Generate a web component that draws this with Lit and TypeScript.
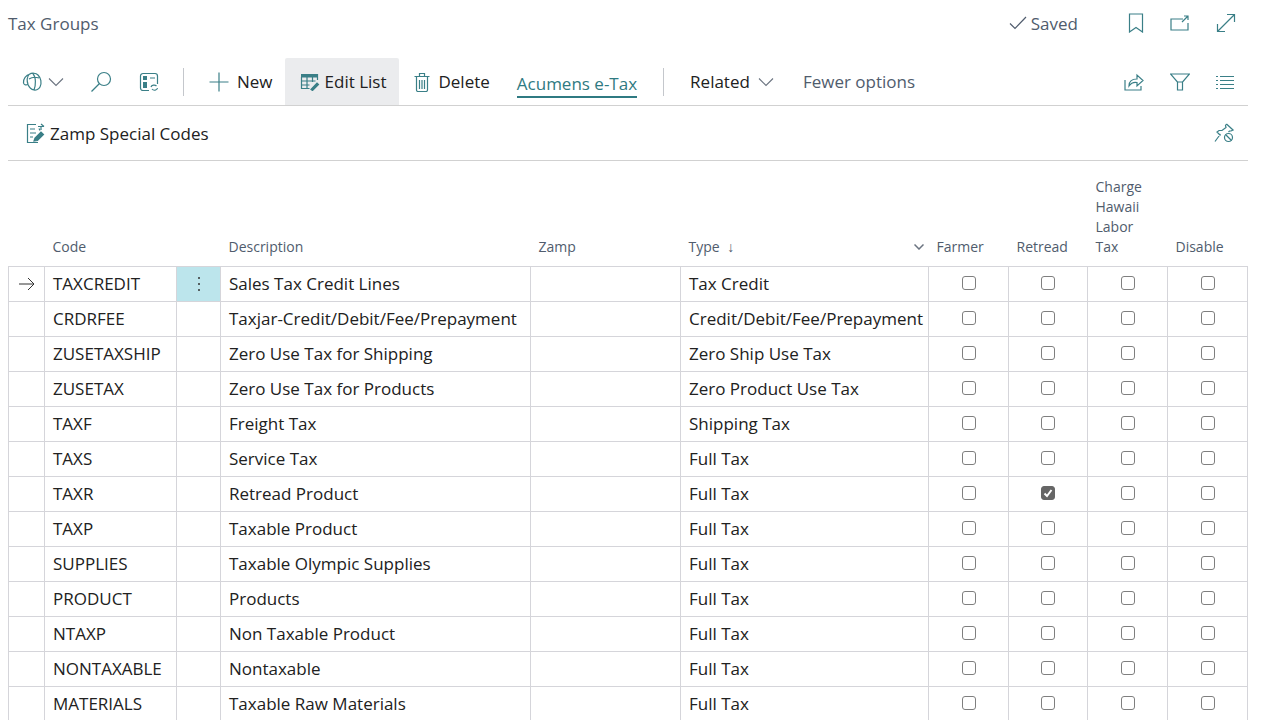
import { html, css, LitElement, svg } from 'lit';
import { customElement } from 'lit/decorators.js';

interface Row {
  code: string;
  description: string;
  type: string;
  retread?: boolean;
}

const rows: Row[] = [
  { code: 'TAXCREDIT', description: 'Sales Tax Credit Lines', type: 'Tax Credit' },
  { code: 'CRDRFEE', description: 'Taxjar-Credit/Debit/Fee/Prepayment', type: 'Credit/Debit/Fee/Prepayment' },
  { code: 'ZUSETAXSHIP', description: 'Zero Use Tax for Shipping', type: 'Zero Ship Use Tax' },
  { code: 'ZUSETAX', description: 'Zero Use Tax for Products', type: 'Zero Product Use Tax' },
  { code: 'TAXF', description: 'Freight Tax', type: 'Shipping Tax' },
  { code: 'TAXS', description: 'Service Tax', type: 'Full Tax' },
  { code: 'TAXR', description: 'Retread Product', type: 'Full Tax', retread: true },
  { code: 'TAXP', description: 'Taxable Product', type: 'Full Tax' },
  { code: 'SUPPLIES', description: 'Taxable Olympic Supplies', type: 'Full Tax' },
  { code: 'PRODUCT', description: 'Products', type: 'Full Tax' },
  { code: 'NTAXP', description: 'Non Taxable Product', type: 'Full Tax' },
  { code: 'NONTAXABLE', description: 'Nontaxable', type: 'Full Tax' },
  { code: 'MATERIALS', description: 'Taxable Raw Materials', type: 'Full Tax' },
];

const icon = (w: number, h: number, body: unknown) => html`
  <svg class="icon" width=${w} height=${h} viewBox="0 0 ${w} ${h}">${body}</svg>
`;

const chevron = html`
  <svg class="chev" width="16" height="10" viewBox="0 0 16 10"><path d="M1 1.5 8 8.5 15 1.5" /></svg>
`;

const icons = {
  bookmark: icon(16, 20, svg`<path d="M1.5 1h13v18l-6.5-4.5L1.5 19z" />`),
  share: icon(20, 16, svg`<path d="M13 4H1v11h17V8M12 7l6-6M14 1h4v4" />`),
  expand: icon(20, 20, svg`<path d="M1.5 18.5 18.5 1.5M11 1.500h7.500V9M1.500 11v7.500H9" />`),
  copilot: icon(22, 20, svg`<path d="M7 2.500C10 .5 14 1 16 3c3 3 4 8 2 12-1 2-4 3.500-6 3-3-.5-5-3-6-5.500C5 9.500 5 5 7 2.500zM8 2C4 3 1 7 1.500 11c.3 1.500 2 2.500 4.500 1.500M11 2c3 3 3 11 1 16M7 7c3-2 7-2 10-1" />`),
  search: icon(22, 22, svg`<circle cx="14" cy="8" r="6.500" /><path d="M9.500 12.500 1.500 20.500" />`),
  layout: icon(20, 20, svg`<path d="M10 18.500H4A2.500 2.500 0 0 1 1.500 16V4A2.500 2.500 0 0 1 4 1.500h12A2.500 2.500 0 0 1 18.500 4v8M11 6h5" /><rect class="solid" x="4" y="4" width="4" height="4" /><rect class="solid" x="4" y="10" width="4" height="6" /><path d="M12 15c.5-2 4-2.500 5.500-1M18.500 16c-.5 2.500-4 3-5.500 1" />`),
  plus: icon(20, 20, svg`<path d="M10 .5v19M.5 10h19" />`),
  editList: icon(20, 18, svg`<rect class="solid" x="1" y="1" width="17" height="3.500" /><path d="M1.500 4v11.500h8M7 4v11M12.500 4v5M1.500 8h14M1.500 12h8M17.500 1v6" /><path class="thick" d="M11 16.500l6-6.500 1.500 1.500-6 6z" />`),
  trash: icon(16, 20, svg`<path d="M2.500 5v13a1.500 1.500 0 0 0 1.500 1.500h8a1.500 1.500 0 0 0 1.500-1.500V5M.5 4.500h15M5.500 4V1.500h5V4M5.500 8v9M8 8v9M10.500 8v9" />`),
  shareOut: icon(20, 18, svg`<path d="M1 7v10h16v-4M5 13c0-5 3-7 8-7V2l6 5.500-6 5.500V9.500c-3-.5-6 .5-8 3.500z" />`),
  filter: icon(20, 18, svg`<path d="M.5 1h19l-7 8v8h-5V9zM7.500 9h5" />`),
  list: icon(18, 14, svg`<path d="M0 1.500h2M4 1.500h14M0 5.500h2M4 5.500h14M0 9.500h2M4 9.500h14M0 13.500h2M4 13.500h14" />`),
  specialCodes: icon(20, 20, svg`<path d="M10 1.500H1.500v18H12M15 4v3M4 6h5M4 10h6M4 14h3" /><path class="thick" d="M8 18l1-3 6-6 2.500 2.500-6 6z" /><path d="M12 3.500h6M15 1l3 2.500M13 5.500l1 2" />`),
  pin: icon(20, 20, svg`<path d="M12.500 1 19 7l-2 1-1.500 0-1 1M12.500 1l-1 1.500.5 2L8 7.500 5 7.500 3 9l3.500 3.500M6.500 11 1 18.500" /><circle cx="14.500" cy="14.500" r="4" /><path d="M11.500 11.500l6 6" />`),
  saved: icon(18, 14, svg`<path class="gray" d="M1 7.500 6 12.500 17 1" />`),
};

@customElement('app-root')
export class AppRoot extends LitElement {
  static styles = css`
    :host {
      display: block;
      width: 1280px;
      height: 720px;
      overflow: hidden;
      box-sizing: border-box;
      padding-left: 8px;
      background: #fff;
      color: #212121;
      font-family: 'Open Sans', 'Noto Sans', sans-serif;
      font-size: 17px;
    }

    svg.icon {
      display: block;
      flex: none;
      fill: none;
      stroke: #3a7f87;
      stroke-width: 1.2;
    }

    svg.icon .solid {
      fill: #3a7f87;
      stroke: none;
    }

    svg.icon .thick {
      fill: #3a7f87;
    }

    svg.icon .gray {
      stroke: #505c6d;
    }

    svg.chev {
      display: block;
      fill: none;
      stroke: #6b7480;
      stroke-width: 1.1;
    }

    .titlebar {
      width: 1240px;
      height: 46px;
      display: flex;
      align-items: center;
      color: #505c6d;
    }

    .title {
      flex: 1;
    }

    .saved {
      display: flex;
      align-items: center;
      gap: 4px;
      margin-right: 50px;
    }

    .title-icons {
      display: flex;
      align-items: center;
      gap: 26px;
      margin-right: 12px;
    }

    .toolbar {
      width: 1240px;
      height: 47px;
      margin-top: 12px;
      display: flex;
      align-items: center;
      border-bottom: 1px solid #d1d1d1;
      box-sizing: content-box;
    }

    .quick {
      display: flex;
      align-items: center;
      padding-left: 14px;
    }

    .sep {
      width: 1px;
      height: 28px;
      background: #c4c7cc;
    }

    .cmd {
      display: flex;
      align-items: center;
      gap: 8px;
      height: 47px;
      box-sizing: border-box;
      white-space: nowrap;
    }

    .cmd.active {
      background: #ebecee;
      border-radius: 2px 2px 0 0;
      padding: 0 13px 0 15px;
      gap: 5px;
    }

    .link {
      color: #2f7a82;
      height: 47px;
      box-sizing: border-box;
      padding-top: 13px;
      line-height: 25px;
    }

    .link span {
      display: block;
      border-bottom: 2px solid #2f7a82;
      height: 25px;
    }

    .muted {
      color: #505c6d;
    }

    .spacer {
      flex: 1;
    }

    .right-icons {
      display: flex;
      align-items: center;
      gap: 26px;
      margin-right: 14px;
    }

    .actions {
      width: 1240px;
      height: 55px;
      display: flex;
      align-items: center;
      border-bottom: 1px solid #d1d1d1;
      padding-left: 18px;
      padding-right: 14px;
      box-sizing: border-box;
      gap: 4px;
    }

    table {
      border-collapse: collapse;
      table-layout: fixed;
      width: 1240px;
    }

    th {
      height: 105px;
      padding: 0 0 9px 8px;
      box-sizing: border-box;
      vertical-align: bottom;
      text-align: left;
      font-weight: 400;
      font-size: 14px;
      line-height: 20px;
      color: #505c6d;
    }

    .type-head {
      display: flex;
      align-items: center;
      justify-content: space-between;
      padding-right: 5px;
    }

    .sort {
      margin-left: 4px;
    }

    td {
      height: 35px;
      padding: 0 0 0 8px;
      box-sizing: border-box;
      border: 1px solid #d5d5da;
      white-space: nowrap;
      overflow: hidden;
    }

    td.arrow,
    td.menu,
    td.check {
      padding: 0;
      text-align: center;
    }

    td.menu.on {
      background: #bce5ec;
    }

    .dots {
      display: flex;
      flex-direction: column;
      align-items: center;
      gap: 4px;
    }

    .dots i {
      width: 2px;
      height: 2px;
      background: #333;
      border-radius: 50%;
    }

    .arrow svg {
      display: block;
      margin: auto;
      fill: none;
      stroke: #333;
      stroke-width: 1;
    }

    .box {
      display: block;
      width: 14px;
      height: 14px;
      margin: -2px auto 0;
      box-sizing: border-box;
      border: 1px solid #7f7f7f;
      border-radius: 3px;
      background: #fff;
    }

    .box.on {
      background: #666;
      border-color: #666;
    }

    .box svg {
      display: block;
      fill: none;
      stroke: #fff;
      stroke-width: 2;
    }
  `;

  private renderRow(row: Row, i: number) {
    return html`
      <tr>
        <td class="arrow">
          ${i === 0
            ? html`<svg width="18" height="14" viewBox="0 0 18 14"><path d="M1 7h15M10 1l6 6-6 6" /></svg>`
            : ''}
        </td>
        <td>${row.code}</td>
        <td class="menu ${i === 0 ? 'on' : ''}">
          ${i === 0 ? html`<div class="dots"><i></i><i></i><i></i></div>` : ''}
        </td>
        <td>${row.description}</td>
        <td></td>
        <td>${row.type}</td>
        <td class="check"><span class="box"></span></td>
        <td class="check">
          <span class="box ${row.retread ? 'on' : ''}">
            ${row.retread
              ? html`<svg width="12" height="12" viewBox="0 0 12 12"><path d="M2.500 6.500 5 9l4.500-6" /></svg>`
              : ''}
          </span>
        </td>
        <td class="check"><span class="box"></span></td>
        <td class="check"><span class="box"></span></td>
      </tr>
    `;
  }

  render() {
    return html`
      <div class="titlebar">
        <div class="title">Tax Groups</div>
        <div class="saved">${icons.saved} Saved</div>
        <div class="title-icons">${icons.bookmark} ${icons.share} ${icons.expand}</div>
      </div>

      <div class="toolbar">
        <div class="quick">
          ${icons.copilot}
          <span style="width:4px"></span>
          ${chevron}
          <span style="width:26px"></span>
          ${icons.search}
          <span style="width:27px"></span>
          ${icons.layout}
        </div>
        <span style="width:24px"></span>
        <div class="sep"></div>
        <span style="width:25px"></span>
        <div class="cmd">${icons.plus} New</div>
        <span style="width:12px"></span>
        <div class="cmd active">${icons.editList} Edit List</div>
        <span style="width:15px"></span>
        <div class="cmd">${icons.trash} Delete</div>
        <span style="width:27px"></span>
        <div class="link"><span>Acumens e-Tax</span></div>
        <span style="width:26px"></span>
        <div class="sep"></div>
        <span style="width:26px"></span>
        <div class="cmd">Related ${chevron}</div>
        <span style="width:29px"></span>
        <div class="cmd muted">Fewer options</div>
        <div class="spacer"></div>
        <div class="right-icons">${icons.shareOut} ${icons.filter} ${icons.list}</div>
      </div>

      <div class="actions">
        ${icons.specialCodes}
        <span>Zamp Special Codes</span>
        <div class="spacer"></div>
        ${icons.pin}
      </div>

      <table>
        <colgroup>
          <col style="width:36px" />
          <col style="width:132px" />
          <col style="width:44px" />
          <col style="width:310px" />
          <col style="width:150px" />
          <col style="width:248px" />
          <col style="width:80px" />
          <col style="width:79px" />
          <col style="width:80px" />
          <col style="width:80px" />
        </colgroup>
        <thead>
          <tr>
            <th></th>
            <th>Code</th>
            <th></th>
            <th>Description</th>
            <th>Zamp</th>
            <th>
              <div class="type-head">
                <span>Type <span class="sort">↓</span></span>
                ${html`<svg class="chev" width="10" height="6" viewBox="0 0 10 6"><path d="M.5.5 5 5 9.500.5" stroke-width="1.500" /></svg>`}
              </div>
            </th>
            <th>Farmer</th>
            <th>Retread</th>
            <th>Charge<br />Hawaii<br />Labor<br />Tax</th>
            <th>Disable</th>
          </tr>
        </thead>
        <tbody>
          ${rows.map((row, i) => this.renderRow(row, i))}
        </tbody>
      </table>
    `;
  }
}
